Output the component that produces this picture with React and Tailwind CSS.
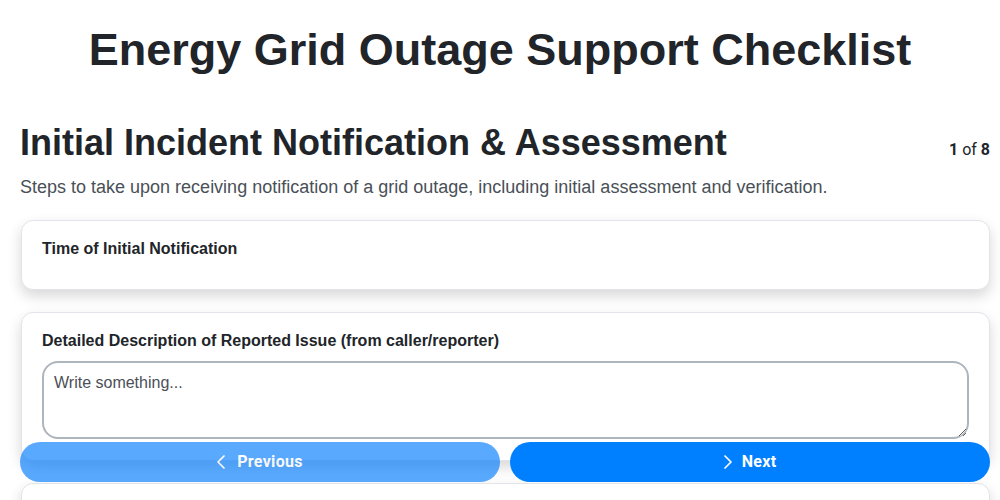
import React, { useState } from 'react';
import { ChevronLeft, ChevronRight } from 'lucide-react';

const steps = [
  {
    title: 'Initial Incident Notification & Assessment',
    description:
      'Steps to take upon receiving notification of a grid outage, including initial assessment and verification.',
    fields: [
      { label: 'Time of Initial Notification', type: 'empty' },
      { label: 'Detailed Description of Reported Issue (from caller/reporter)', type: 'textarea' },
      { label: 'Location of Reported Outage', type: 'textarea' },
    ],
  },
];

const FieldCard = ({ field }) => (
  <div className="rounded-xl border border-[#e3e4ea] bg-white px-5 pt-4 pb-5 shadow-[0_6px_14px_rgba(0,0,0,0.16)]">
    <label className="mb-2 block text-base font-bold leading-6 text-[#212529]">{field.label}</label>
    {field.type === 'textarea' ? (
      <textarea
        placeholder="Write something..."
        className="mb-px block h-[78px] w-full rounded-2xl border-2 border-[#adb5bd] px-[10px] py-2 text-base text-[#212529] outline-none placeholder:text-[#4b5058]"
      />
    ) : (
      <div />
    )}
  </div>
);

export default function App() {
  const [stepIndex, setStepIndex] = useState(0);
  const step = steps[stepIndex];
  const total = 8;

  return (
    <div className="h-screen overflow-y-auto bg-white font-['Liberation_Sans',Arial,sans-serif] text-[#212529]">
      <h1 className="pt-[22px] text-center text-[45px] font-bold leading-[56px]">
        Energy Grid Outage Support Checklist
      </h1>

      <main className="pl-5 pr-[10px] pt-[42px]">
        <div className="flex items-baseline justify-between">
          <h2 className="text-4xl font-bold leading-[46px]">{step.title}</h2>
          <div className="font-['Roboto',sans-serif] text-base">
            <span className="font-bold">{stepIndex + 1}</span> of <span className="font-bold">{total}</span>
          </div>
        </div>
        <p className="mt-[9px] text-lg leading-6 text-[#495057]">{step.description}</p>

        <div className="mt-[21px] ml-px flex flex-col gap-[22px]">
          {step.fields.map((field) => (
            <FieldCard key={field.label} field={field} />
          ))}
        </div>

        {/* Navigation stays pinned to the bottom of the window */}
        <div className="sticky bottom-[18px] mt-4 flex gap-[10px] font-['Roboto',sans-serif] tracking-[0.3px]">
          <button
            disabled={stepIndex === 0}
            onClick={() => setStepIndex(stepIndex - 1)}
            className="flex h-10 flex-1 items-center justify-center gap-1 rounded-full bg-[#007bff] pr-2 text-base font-bold text-white disabled:opacity-65"
          >
            <ChevronLeft size={24} strokeWidth={1.75} />
            Previous
          </button>
          <button
            onClick={() => setStepIndex(Math.min(stepIndex + 1, steps.length - 1))}
            className="flex h-10 flex-1 items-center justify-center gap-[2px] rounded-full bg-[#0080ff] pr-2 text-base font-bold text-white"
          >
            <ChevronRight size={24} strokeWidth={1.75} />
            Next
          </button>
        </div>
        <div className="h-6" />
      </main>
    </div>
  );
}
